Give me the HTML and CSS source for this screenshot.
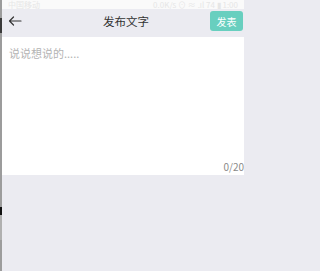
FILE: index.html
```html
<!DOCTYPE html>
<html lang="zh">
<head>
<meta charset="utf-8">
<meta name="viewport" content="width=244">
<link rel="stylesheet" href="styles.css">
</head>
<body>
<div class="app">
  <div class="edge">
    <span class="seg s1"></span>
    <span class="seg s2"></span>
    <span class="seg s3"></span>
    <span class="seg s4"></span>
    <span class="seg s5"></span>
  </div>
  <div class="main">
    <div class="status">
      <span>中国移动</span>
      <span>0.0K/s ⊙ ≈ .ıl 74 ▮ 1:00</span>
    </div>
    <div class="header">
      <span class="back">
        <svg width="14" height="10" viewBox="0 0 14 10"><path d="M13 5H1.5M5.5 1L1.5 5l4 4" fill="none" stroke="#333" stroke-width="1.2" stroke-linecap="round" stroke-linejoin="round"/></svg>
      </span>
      <span class="title">发布文字</span>
      <span class="btn">发表</span>
    </div>
    <div class="editor">
      <div class="placeholder">说说想说的.....</div>
      <div class="count">0/20</div>
    </div>
    <div class="rest"></div>
  </div>
</div>
</body>
</html>
```
FILE: styles.css
```css
html, body {
  margin: 0;
  padding: 0;
  width: 244px;
  height: 271px;
  overflow: hidden;
}
body {
  font-family: "Noto Sans CJK SC", "Noto Sans", sans-serif;
  background: #ebebf1;
}
.app {
  display: flex;
  width: 244px;
  height: 271px;
  overflow: hidden;
}
.edge {
  width: 2px;
  flex: none;
  background: #9c9c9c;
  display: flex;
  flex-direction: column;
}
.seg { display: block; }
.s1 { height: 18px; }
.s2 { height: 15px; background: #3a3a3a; }
.s3 { height: 174px; }
.s4 { height: 8px; background: #111; }
.s5 { height: 25px; background: #b0b0b0; }
.main {
  width: 242px;
  display: flex;
  flex-direction: column;
  overflow: hidden;
}
.status {
  height: 9px;
  background: #fafafa;
  display: flex;
  justify-content: space-between;
  align-items: flex-end;
  padding: 0 6px;
  font-size: 8px;
  line-height: 8px;
  color: #e6e6e6;
  overflow: hidden;
  white-space: nowrap;
}
.header {
  height: 28px;
  background: #ebebf1;
  display: flex;
  align-items: center;
  padding: 0 1px 4px 6px;
  box-sizing: border-box;
}
.back {
  width: 40px;
  display: flex;
  align-items: center;
}
.back svg { display: block; }
.title {
  flex: 1;
  text-align: center;
  font-size: 11.5px;
  color: #333;
  padding-right: 6px;
}
.btn {
  width: 33px;
  height: 20px;
  border-radius: 3px;
  background: #68cfbf;
  color: #fff;
  font-size: 10px;
  display: flex;
  align-items: center;
  justify-content: center;
}
.editor {
  height: 138px;
  background: #fff;
  display: flex;
  flex-direction: column;
  justify-content: space-between;
  padding: 9px 0 2px 7px;
  box-sizing: border-box;
}
.placeholder {
  font-size: 11px;
  color: #b3b3b3;
  line-height: 14px;
}
.count {
  align-self: flex-end;
  font-size: 10px;
  color: #8a8a8a;
  line-height: 12px;
}
.rest {
  flex: 1;
  background: #ebebf1;
}
```
